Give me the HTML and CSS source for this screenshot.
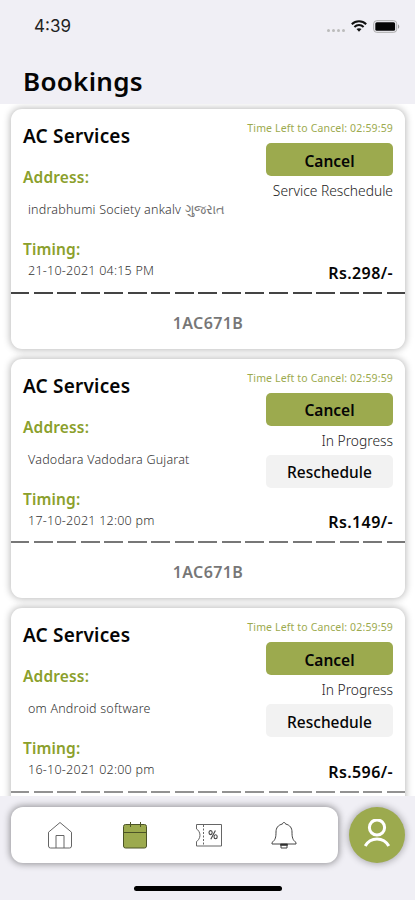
FILE: index.html
```html
<!DOCTYPE html>
<html lang="en">
<head>
    <meta charset="UTF-8">
    <title>Bookings</title>
    <link rel="stylesheet" href="styles.css">
</head>
<body>
    <div class="status">
        <span class="clock">4:39</span>
        <div class="signals">
            <span class="dots"><i></i><i></i><i></i><i></i></span>
            <svg class="wifi" width="16" height="12" viewBox="0 0 16 12" fill="none" stroke="#111" stroke-width="2">
                <path d="M.8 4.2C4.8.2 11.2.2 15.2 4.2"/>
                <path d="M3.4 7C6 4.4 10 4.4 12.6 7"/>
                <path d="M5.5 9.1L8 11.7l2.5-2.6C9 7.8 7 7.8 5.5 9.1z" fill="#111" stroke="none"/>
            </svg>
            <svg class="battery" width="27" height="13" viewBox="0 0 27 13">
                <rect x=".7" y=".7" width="23" height="11.6" rx="3" fill="#f0eff5" stroke="#aaa" stroke-width="1"/>
                <rect x="2.3" y="2.3" width="19.8" height="8.4" rx="1.5" fill="#050505"/>
                <path d="M25 4.2c1.7.8 1.7 3.8 0 4.6z" fill="#999"/>
            </svg>
        </div>
    </div>
    <h1>Bookings</h1>
    <div class="list">
        <div class="card">
            <div class="main">
                <div class="info">
                    <h2>AC Services</h2>
                    <h3>Address:</h3>
                    <p class="address">indrabhumi Society ankalv <span class="gujarati">ગુજરાત</span></p>
                    <h3 class="timing">Timing:</h3>
                    <p class="time">21-10-2021 04:15 PM</p>
                </div>
                <div class="side">
                    <span class="left">Time Left to Cancel: 02:59:59</span>
                    <button class="cancel">Cancel</button>
                    <span class="state">Service Reschedule</span>
                    <b class="price">Rs.298/-</b>
                </div>
            </div>
            <div class="dash"></div>
            <div class="code">1AC671B</div>
        </div>
        <div class="card">
            <div class="main">
                <div class="info">
                    <h2>AC Services</h2>
                    <h3>Address:</h3>
                    <p class="address">Vadodara Vadodara Gujarat</p>
                    <h3 class="timing">Timing:</h3>
                    <p class="time">17-10-2021 12:00 pm</p>
                </div>
                <div class="side">
                    <span class="left">Time Left to Cancel: 02:59:59</span>
                    <button class="cancel">Cancel</button>
                    <span class="state">In Progress</span>
                    <button class="reschedule">Reschedule</button>
                    <b class="price">Rs.149/-</b>
                </div>
            </div>
            <div class="dash gray"></div>
            <div class="code">1AC671B</div>
        </div>
        <div class="card">
            <div class="main">
                <div class="info">
                    <h2>AC Services</h2>
                    <h3>Address:</h3>
                    <p class="address">om Android software</p>
                    <h3 class="timing">Timing:</h3>
                    <p class="time">16-10-2021 02:00 pm</p>
                </div>
                <div class="side">
                    <span class="left">Time Left to Cancel: 02:59:59</span>
                    <button class="cancel">Cancel</button>
                    <span class="state">In Progress</span>
                    <button class="reschedule">Reschedule</button>
                    <b class="price">Rs.596/-</b>
                </div>
            </div>
            <div class="dash light"></div>
        </div>
    </div>
    <div class="bottom">
        <div class="tabs">
            <svg width="28" height="30" viewBox="0 0 28 30" fill="none" stroke="#666" stroke-width="1">
                <path d="M2.5 12.2L14 2.5l11.5 9.7V26q0 2-2 2h-19q-2 0-2-2z"/>
                <path d="M10 28V15.500h8V28"/>
            </svg>
            <svg width="28" height="30" viewBox="0 0 28 30" fill="none" stroke="#4c5427" stroke-width="1">
                <rect x="2.5" y="4.5" width="23" height="23.5" rx="2" fill="#9caa4e"/>
                <path d="M2.5 12.5h23M9.5 2v5M19.5 2v5"/>
            </svg>
            <svg width="28" height="30" viewBox="0 0 28 30" fill="none" stroke="#666" stroke-width="1">
                <path d="M1.500 4.500h25v21.500h-25v-4.500C3 21 5 18 5 15.200S3 9.500 1.500 9z"/>
                <path d="M8.500 5v21" stroke-dasharray="2 1.5"/>
                <g stroke="#444" stroke-width="1.1">
                    <ellipse cx="15.600" cy="12.600" rx="1.600" ry="2"/>
                    <ellipse cx="20.600" cy="16.800" rx="1.600" ry="2"/>
                    <path d="M20.400 10.400l-4.600 8.800"/>
                </g>
            </svg>
            <svg width="28" height="30" viewBox="0 0 28 30" fill="none" stroke="#444" stroke-width="1">
                <path d="M12.500 4c0-2 3-2 3 0 4.500 1 6.500 4 6.500 8 0 5 .5 8 4 10.500v1.500H2v-1.500C5.500 20 6 17 6 12c0-4 2-7 6.500-8z"/>
                <path d="M10.500 24v1.300h7V24z" fill="#111"/>
                <path d="M11 25v3h6v-3"/>
            </svg>
        </div>
        <div class="profile">
            <svg width="30" height="32" viewBox="0 0 30 32" fill="none" stroke="#fff" stroke-width="3">
                <circle cx="15" cy="8.500" r="7.600"/>
                <path d="M3.200 27C8.500 17.500 21.500 17.500 26.800 27"/>
            </svg>
        </div>
    </div>
    <div class="home"></div>
</body>
</html>
```
FILE: styles.css
```css
*{
    margin: 0;
    padding: 0;
    box-sizing: border-box;
}
body
{
    width: 415px;
    height: 900px;
    overflow: hidden;
    background-color: #f0eff5;
    font-family: "Noto Sans", sans-serif;
    color: #050505;
}
.status
{
    height: 52px;
    padding: 0 15px 0 34px;
    display: flex;
    align-items: center;
    justify-content: space-between;
}
.clock
{
    font-family: Inter, sans-serif;
    font-size: 17px;
    font-weight: 400;
    color: #222;
}
.signals
{
    display: flex;
    align-items: center;
    gap: 6px;
}
.dots
{
    display: flex;
    gap: 2px;
    padding-top: 8px;
}
.dots i
{
    width: 3px;
    height: 3px;
    border-radius: 50%;
    background-color: #bbb;
}
h1
{
    height: 52px;
    padding-left: 23px;
    font-size: 26px;
    line-height: 59px;
    font-weight: 600;
    letter-spacing: 0.3px;
}
.list
{
    height: 692px;
    padding: 5px 10px 0 11px;
    overflow: hidden;
    background-color: #fff;
}
.card
{
    height: 239.5px;
    margin-bottom: 10px;
    border-radius: 11px;
    background-color: #fff;
    box-shadow: 0 0 7px 1px rgba(0,0,0,0.27);
}
.main
{
    height: 182.5px;
    padding: 0 12px;
    display: flex;
    justify-content: space-between;
}
.info
{
    padding-top: 12px;
}
h2
{
    font-size: 19px;
    line-height: 30px;
    font-weight: 600;
    letter-spacing: 0.2px;
}
h3
{
    margin-top: 14px;
    font-size: 15.5px;
    line-height: 24px;
    font-weight: 600;
    letter-spacing: 0.15px;
    color: #8ba02c;
}
.address,
.time
{
    padding-left: 5px;
    font-size: 12.5px;
    line-height: 20px;
    font-weight: 300;
    letter-spacing: 0.2px;
    color: #333;
    white-space: nowrap;
}
.time
{
    margin-top: 1px;
    letter-spacing: 0.25px;
}
.address
{
    margin-top: 11px;
}
.gujarati
{
    color: #777;
}
.timing
{
    margin-top: 18px;
    line-height: 22px;
}
.side
{
    width: 160px;
    padding: 11px 0 7px;
    display: flex;
    flex-direction: column;
    align-items: flex-end;
}
.left
{
    font-size: 10.5px;
    line-height: 16px;
    letter-spacing: 0.15px;
    color: #9caa4e;
    white-space: nowrap;
}
.side button
{
    width: 127px;
    height: 33px;
    border: none;
    border-radius: 5px;
    padding-top: 2px;
    flex-shrink: 0;
    font-family: inherit;
    font-size: 15.5px;
    font-weight: 600;
    color: #050505;
}
.side .cancel
{
    margin-top: 7px;
    background-color: #9caa4e;
}
.side .reschedule
{
    background-color: #f2f2f2;
    font-weight: 500;
}
.state
{
    padding-top: 1px;
    font-size: 13.8px;
    line-height: 28px;
    font-weight: 300;
    color: #222;
}
.price
{
    margin-top: auto;
    font-size: 16px;
    line-height: 24px;
    font-weight: 600;
    letter-spacing: 0.4px;
}
.dash
{
    height: 2px;
    background: repeating-linear-gradient(90deg, #444 0 19px, transparent 19px 23.55px) -1px 0 / 420px 2px;
}
.gray
{
    background-image: repeating-linear-gradient(90deg, #777 0 19px, transparent 19px 23.55px);
}
.light
{
    background-image: repeating-linear-gradient(90deg, #929292 0 19px, transparent 19px 23.55px);
}
.code
{
    height: 55px;
    font-size: 16px;
    line-height: 58px;
    font-weight: 600;
    letter-spacing: 0.4px;
    text-align: center;
    color: #777;
}
.bottom
{
    height: 89px;
    padding: 11px 10px 0 11px;
    display: flex;
    gap: 11px;
}
.tabs
{
    width: 327px;
    height: 56px;
    padding: 0 40px 0 35px;
    border-radius: 12px;
    display: flex;
    align-items: center;
    justify-content: space-between;
    background-color: #fff;
    box-shadow: 0 0 7px 1px rgba(0,0,0,0.4);
}
.profile
{
    width: 56px;
    height: 56px;
    border-radius: 50%;
    display: flex;
    align-items: center;
    justify-content: center;
    background-color: #9caa4e;
    box-shadow: 0 0 7px 1px rgba(0,0,0,0.3);
}
.home
{
    width: 148px;
    height: 5px;
    margin: 1px auto 0;
    border-radius: 3px;
    background-color: #000;
}
```
